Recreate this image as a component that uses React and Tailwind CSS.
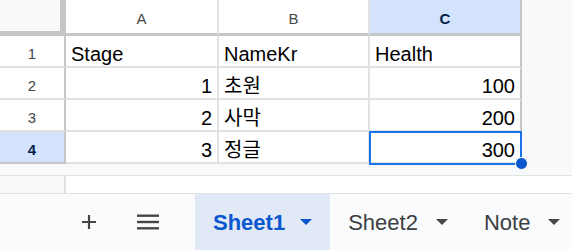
const columns = [
  { key: "a", label: "A", width: "w-[153px]" },
  { key: "b", label: "B", width: "w-[151px]" },
  { key: "c", label: "C", width: "w-[152px]", active: true },
];

const rows = [
  { n: 1, a: "Stage", b: "NameKr", c: "Health", header: true },
  { n: 2, a: "1", b: "초원", c: "100" },
  { n: 3, a: "2", b: "사막", c: "200" },
  { n: 4, a: "3", b: "정글", c: "300", active: true },
];

function Caret({ color = "#444746" }) {
  return (
    <svg width="12" height="6" viewBox="0 0 12 6" className="shrink-0">
      <path d="M0 0h12L6 6z" fill={color} />
    </svg>
  );
}

function Cell({ value, align, width, selected }) {
  return (
    <div
      className={`relative box-border h-[32px] border-r-2 border-b-2 border-[#e1e3e1] ${width}`}
    >
      <div
        className={`flex h-full items-end px-[5px] text-[20px] leading-[23px] text-black ${
          align === "right" ? "justify-end" : "justify-start"
        }`}
      >
        {value}
      </div>
      {selected && (
        <>
          <div className="absolute -left-px -top-px h-[34px] w-[153px] border-2 border-[#1a73e8]" />
          <div className="absolute -right-[8px] -bottom-[8px] h-[13px] w-[13px] rounded-full border border-white bg-[#0b57d0]" />
        </>
      )}
    </div>
  );
}

function Tab({ name, active }) {
  return (
    <div
      className={`flex h-full shrink-0 items-center px-[18px] ${
        active ? "gap-[15px] bg-[#e1e9f7]" : "gap-[18px]"
      }`}
    >
      <span
        className={`whitespace-nowrap text-[22px] ${
          active ? "font-semibold text-[#0b57d0]" : "text-[#3c4043]"
        }`}
      >
        {name}
      </span>
      <Caret color={active ? "#0b57d0" : "#444746"} />
    </div>
  );
}

export default function App() {
  return (
    <div className="flex h-[250px] w-[572px] flex-col overflow-hidden bg-white font-['Liberation_Sans','Noto_Sans_CJK_KR',sans-serif]">
      {/* grid */}
      <div className="flex h-[164px] bg-[#f8f9fa]">
        <div className="flex flex-col">
          {/* column headers */}
          <div className="flex h-[36px]">
            <div className="box-border h-[36px] w-[66px] border-r-[6px] border-b-[5px] border-[#c4c7c5] bg-[#f8f9fa]" />
            {columns.map((col) => (
              <div
                key={col.key}
                className={`box-border flex h-[36px] items-end justify-center border-b-[3px] border-b-[#c4c7c5] pb-[6px] text-[15px] leading-[17px] ${
                  col.width
                } ${
                  col.active
                    ? "border-r-2 border-r-[#c4c7c5] bg-[#d3e3fd] font-bold text-[#041e49]"
                    : "border-r-2 border-r-[#e1e3e1] bg-white text-[#444746]"
                }`}
              >
                {col.label}
              </div>
            ))}
          </div>
          {/* rows */}
          {rows.map((row) => (
            <div key={row.n} className="flex bg-white">
              <div
                className={`box-border flex h-[32px] w-[66px] items-end justify-center border-r-2 border-b-2 border-r-[#c4c7c5] pb-[4px] text-[15px] leading-[17px] ${
                  row.active
                    ? "border-b-[#c4c7c5] bg-[#d3e3fd] font-bold text-[#041e49]"
                    : "border-b-[#e1e3e1] text-[#444746]"
                }`}
              >
                {row.n}
              </div>
              <Cell value={row.a} align={row.header ? "left" : "right"} width="w-[153px]" />
              <Cell value={row.b} align="left" width="w-[151px]" />
              <Cell
                value={row.c}
                align={row.header ? "left" : "right"}
                width="w-[152px] border-r-[#c4c7c5]"
                selected={row.active}
              />
            </div>
          ))}
        </div>
        <div className="flex-1" />
      </div>

      {/* below grid */}
      <div className="h-[12px] border-b border-[#e1e3e1] bg-[#f8f9fa]" />
      <div className="flex h-[18px] border-b border-[#e1e3e1]">
        <div className="w-[66px] border-r-2 border-[#e1e3e1] bg-[#f8f9fa]" />
        <div className="flex-1 bg-white" />
      </div>

      {/* sheet tabs */}
      <div className="flex flex-1 items-center bg-[#f9fbfd] pl-[69px]">
        <div className="flex h-[40px] w-[40px] shrink-0 items-center justify-center">
          <svg width="16" height="16" viewBox="0 0 16 16">
            <path d="M8 1v14M1 8h14" stroke="#444746" strokeWidth="2.2" />
          </svg>
        </div>
        <div className="ml-[19px] flex h-[40px] w-[40px] shrink-0 items-center justify-center">
          <svg width="22" height="16" viewBox="0 0 22 16">
            <rect x="0" y="0.5" width="22" height="2.4" fill="#444746" />
            <rect x="0" y="6.8" width="22" height="2.4" fill="#444746" />
            <rect x="0" y="13.1" width="22" height="2.4" fill="#444746" />
          </svg>
        </div>
        <div className="ml-[27px] flex h-full shrink-0">
          <Tab name="Sheet1" active />
          <Tab name="Sheet2" />
          <Tab name="Note" />
        </div>
      </div>
    </div>
  );
}
